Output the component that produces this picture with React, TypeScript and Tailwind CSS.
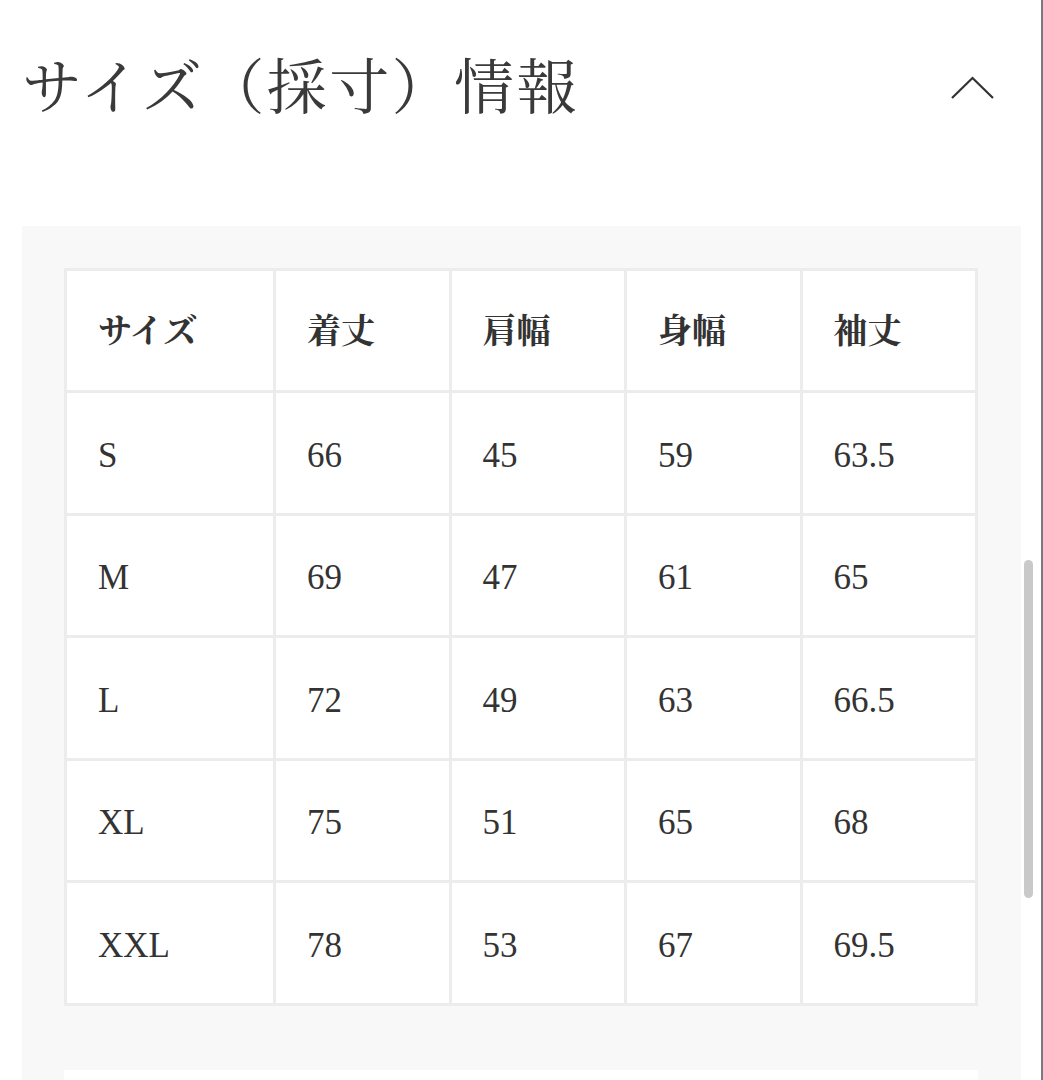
const heads = ['サイズ', '着丈', '肩幅', '身幅', '袖丈'];

const rows = [
  ['S', '66', '45', '59', '63.5'],
  ['M', '69', '47', '61', '65'],
  ['L', '72', '49', '63', '66.5'],
  ['XL', '75', '51', '65', '68'],
  ['XXL', '78', '53', '67', '69.5'],
];

const serif = "font-['Liberation_Serif','Noto_Serif_CJK_JP','Noto_Sans_CJK_JP',serif]";

export default function App() {
  return (
    <div className={`relative w-[1043px] h-[1080px] overflow-hidden bg-white border-r-2 border-[#7a7a7a] text-[#333] ${serif}`}>
      {/* heading */}
      <div className="flex items-center justify-between h-[178px] pl-[22px] pr-[46px]">
        <h2 className="text-[60px] leading-none font-normal tracking-[0.04em] text-[#3a3a3a]">サイズ（採寸）情報</h2>
        <svg width="46" height="24" viewBox="0 0 46 24" fill="none" stroke="#333" strokeWidth="2.2" className="-mt-[2px]">
          <path d="M3 22 L23.5 2 L44 22" />
        </svg>
      </div>

      {/* panel */}
      <div className="mt-[48px] ml-[22px] w-[999px] h-[900px] bg-[#f8f8f8] pt-[42px] px-[42px]">
        <div className="grid grid-cols-[206px_1fr_1fr_1fr_1fr] gap-[3px] p-[3px] bg-[#ececec] w-[914px]">
          {heads.map(h => (
            <div key={h} className="bg-white h-[119px] flex items-center pl-[31px] pt-[2px] text-[34px] font-bold text-[#333]">
              {h}
            </div>
          ))}
          {rows.map(r =>
            r.map((v, i) => (
              <div key={r[0] + i} className="bg-white h-[119.5px] flex items-center pl-[31px] pt-[6px] text-[35px] text-[#333]">
                {v}
              </div>
            ))
          )}
        </div>
        <div className="mt-[64px] w-[914px] h-[80px] bg-white" />
      </div>

      {/* scrollbar */}
      <div className="absolute right-[8px] top-[560px] w-[9px] h-[338px] rounded-full bg-[#c9c9c9]" />
    </div>
  );
}
